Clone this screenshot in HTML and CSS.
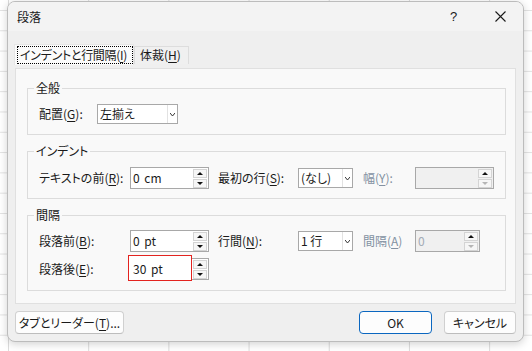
FILE: index.html
```html
<!DOCTYPE html>
<html lang="ja">
<head>
	<meta charset="UTF-8">
	<title>段落</title>
	<link rel="stylesheet" href="styles.css">
</head>
<body>
	<div class="dialog">
		<div class="titlebar">
			<span class="title">段落</span>
			<span class="help">?</span>
			<span class="close">
				<svg width="11" height="11" viewBox="0 0 11 11"><path d="M0.5 0.5 L10.5 10.5 M10.5 0.5 L0.5 10.5" stroke="#1a1a1a" stroke-width="1.1" fill="none"/></svg>
			</span>
		</div>

		<div class="content">
			<div class="tabs">
				<div class="tab active"><span class="focus">インデントと行間隔(<u>I</u>)</span></div>
				<div class="tab">体裁(<u>H</u>)</div>
			</div>

			<div class="panel">
				<fieldset class="group">
					<legend>全般</legend>
					<div class="row">
						<span class="lbl lbl-align">配置(<u>G</u>):</span>
						<div class="select sel-align">
							<span class="val">左揃え</span>
							<span class="drop"><svg width="5" height="3" viewBox="0 0 5 3"><path d="M0 0 L2.5 3 L5 0" stroke="#333" stroke-width="1" fill="none"/></svg></span>
						</div>
					</div>
				</fieldset>

				<fieldset class="group">
					<legend>インデント</legend>
					<div class="row">
						<span class="lbl lbl-first">テキストの前(<u>R</u>):</span>
						<div class="spin">
							<span class="val">0 cm</span>
							<span class="arrows"><span class="arrow up"></span><span class="arrow down"></span></span>
						</div>
						<span class="lbl lbl-mid">最初の行(<u>S</u>):</span>
						<div class="select sel-short">
							<span class="val">(なし)</span>
							<span class="drop"><svg width="5" height="3" viewBox="0 0 5 3"><path d="M0 0 L2.5 3 L5 0" stroke="#333" stroke-width="1" fill="none"/></svg></span>
						</div>
						<span class="lbl lbl-last disabled">幅(<u>Y</u>):</span>
						<div class="spin disabled">
							<span class="val"></span>
							<span class="arrows"><span class="arrow up"></span><span class="arrow down"></span></span>
						</div>
					</div>
				</fieldset>

				<fieldset class="group">
					<legend>間隔</legend>
					<div class="row">
						<span class="lbl lbl-first">段落前(<u>B</u>):</span>
						<div class="spin">
							<span class="val">0 pt</span>
							<span class="arrows"><span class="arrow up"></span><span class="arrow down"></span></span>
						</div>
						<span class="lbl lbl-mid">行間(<u>N</u>):</span>
						<div class="select sel-short">
							<span class="val">1 行</span>
							<span class="drop"><svg width="5" height="3" viewBox="0 0 5 3"><path d="M0 0 L2.5 3 L5 0" stroke="#333" stroke-width="1" fill="none"/></svg></span>
						</div>
						<span class="lbl lbl-last disabled">間隔(<u>A</u>)</span>
						<div class="spin disabled spin-narrow">
							<span class="val">0</span>
							<span class="arrows"><span class="arrow up"></span><span class="arrow down"></span></span>
						</div>
					</div>
					<div class="row">
						<span class="lbl lbl-first">段落後(<u>E</u>):</span>
						<div class="spin marked">
							<span class="val">30 pt</span>
							<span class="arrows"><span class="arrow up"></span><span class="arrow down"></span></span>
						</div>
					</div>
				</fieldset>
			</div>

			<div class="buttons">
				<button class="btn btn-tabs">タブとリーダー(<u>T</u>)...</button>
				<button class="btn btn-ok">OK</button>
				<button class="btn btn-cancel">キャンセル</button>
			</div>
		</div>
	</div>
</body>
</html>
```

FILE: styles.css
```css
		body {
			margin: 0;
			width: 532px;
			height: 351px;
			overflow: hidden;
			font-family: "Noto Sans CJK JP", "Noto Sans", sans-serif;
			font-size: 12px;
			line-height: 16px;
			color: #1a1a1a;
			font-feature-settings: "palt";
			background-color: #fff;
			background-image:
				linear-gradient(to right, #dcdcdc 1px, transparent 1px),
				linear-gradient(to bottom, #e2e2e2 1px, transparent 1px);
			background-size: 80.2px 20.3px;
			background-position: 8px 10px;
		}
		u {
			text-underline-offset: 2px;
		}

		/* fenetre */
		.dialog {
			margin: 1px 0 0 7px;
			width: 517px;
			height: 341px;
			box-sizing: border-box;
			border: 1px solid #bcbcbc;
			border-radius: 8px;
			background: #efefef;
			box-shadow: 0 2px 8px rgba(0, 0, 0, 0.18);
			display: flex;
			flex-direction: column;
			overflow: hidden;
		}
		.titlebar {
			height: 29px;
			flex: none;
			display: flex;
			align-items: center;
			padding-left: 9px;
			background: #f3f3f3;
		}
		.title {
			flex: 1;
		}
		.help, .close {
			width: 45px;
			height: 29px;
			display: flex;
			align-items: center;
			justify-content: center;
		}
		.help {
			font-family: "Liberation Sans", sans-serif;
			font-size: 13px;
			padding-right: 2px;
		}

		.content {
			flex: 1;
			padding: 13px 7px 0 7px;
			display: flex;
			flex-direction: column;
		}

		/* onglets */
		.tabs {
			display: flex;
			align-items: flex-start;
			height: 21px;
		}
		.tab {
			box-sizing: border-box;
			margin-top: 2px;
			height: 18px;
			width: 55px;
			padding-left: 5px;
			line-height: 16px;
			background: #f0f0f0;
			border: 1px solid #dddddd;
			border-bottom: none;
		}
		.tab.active {
			margin: 0 0 0 -1px;
			width: 120px;
			height: 21px;
			padding: 1px 0 0 2px;
			background: #fbfbfb;
			border-color: #e6e6e6;
		}
		.focus {
			display: block;
			height: 18px;
			box-sizing: border-box;
			border: 1px dotted #000;
			padding-left: 2px;
			line-height: 16px;
			letter-spacing: -0.3px;
		}

		.panel {
			margin-top: 3px;
			height: 236px;
			box-sizing: border-box;
			border: 1px solid #e0e0e0;
			background: #f9f9f9;
			padding: 0 9px 0 11px;
		}

		/* groupes */
		.group {
			margin: 8px 0 0;
			padding: 7px 0 9px 11px;
			border: 1px solid #dcdcdc;
			min-width: 0;
		}
		.group:first-child {
			margin-top: 11px;
		}
		.group:nth-child(2) {
			padding-top: 8px;
		}
		.group:nth-child(3) {
			padding-bottom: 10px;
		}
		legend {
			margin-left: -5px;
			padding: 0 2px;
			line-height: 16px;
		}
		.row {
			display: flex;
			align-items: center;
			height: 22px;
		}
		.row + .row {
			margin-top: 6px;
		}
		.lbl {
			flex: none;
			white-space: nowrap;
		}
		.lbl-align { width: 58px; }
		.lbl-first { width: 91px; }
		.lbl-mid { width: 80px; margin-left: 9px; }
		.lbl-last { width: 52px; margin-left: 10px; }
		.disabled { color: #8391a2; }

		/* champs */
		.select {
			display: flex;
			height: 20px;
			box-sizing: border-box;
			border: 1px solid #a8a8a8;
			background: #fff;
		}
		.select .val {
			flex: 1;
			padding-left: 2px;
			line-height: 18px;
			white-space: nowrap;
		}
		.drop {
			width: 9px;
			border-left: 1px solid #e2e2e2;
			display: flex;
			align-items: center;
			justify-content: center;
		}
		.sel-align { width: 81px; }
		.sel-short { width: 55px; }

		.spin {
			position: relative;
			display: flex;
			width: 79px;
			height: 22px;
			box-sizing: border-box;
			border: 1px solid #a8a8a8;
			background: #fff;
		}
		.spin .val {
			flex: 1;
			padding-left: 2px;
			line-height: 20px;
			word-spacing: 2px;
		}
		.spin.disabled {
			background: #f0f0f0;
		}
		.spin.disabled .val {
			color: #a2abb6;
		}
		.spin-narrow {
			width: 65px;
		}
		.arrows {
			width: 14px;
			margin: 0 1px 0 0;
			padding: 0;
			display: flex;
			flex-direction: column;
			justify-content: center;
			gap: 1px;
		}
		.arrow {
			height: 9px;
			box-sizing: border-box;
			border: 1px solid #d4d4d4;
			background: #f6f6f6;
			display: flex;
			align-items: center;
			justify-content: center;
		}
		.arrow::before {
			content: "";
			border-left: 3px solid transparent;
			border-right: 3px solid transparent;
		}
		.arrow.up::before {
			border-bottom: 3px solid #111;
		}
		.arrow.down::before {
			border-top: 3px solid #111;
		}
		.spin.disabled .arrow.down::before {
			border-top-color: #b5b5b5;
		}
		/* cadre rouge autour du champ */
		.marked::after {
			content: "";
			position: absolute;
			left: -3px;
			top: -4px;
			width: 64px;
			height: 26px;
			box-sizing: border-box;
			border: 1px solid #e3231f;
			box-shadow: inset 0 0 0 3px #fff;
			pointer-events: none;
		}

		/* boutons */
		.buttons {
			margin-top: 7px;
			display: flex;
			gap: 12px;
		}
		.btn {
			height: 23px;
			box-sizing: border-box;
			padding: 0;
			font: inherit;
			color: inherit;
			background: #fdfdfd;
			border: 1px solid #d0d0d0;
			border-bottom-color: #bdbdbd;
			border-radius: 4px;
		}
		.btn-tabs {
			width: 109px;
			margin-right: auto;
		}
		.btn-ok {
			width: 73px;
			border-color: #0b67c0;
		}
		.btn-cancel {
			width: 72px;
		}
```
